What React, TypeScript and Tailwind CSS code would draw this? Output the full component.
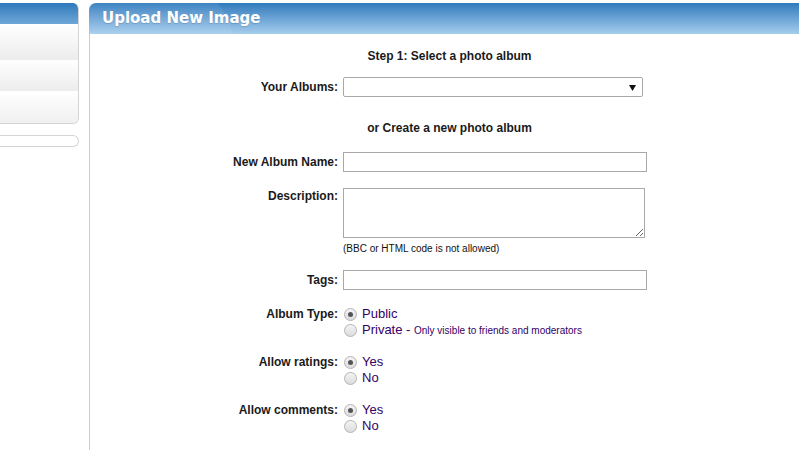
const font = "font-['Liberation_Sans',Arial,sans-serif]";

function Radio({ checked }: { checked?: boolean }) {
  return (
    <span className="flex h-[13px] w-[13px] shrink-0 items-center justify-center rounded-full border border-[#b3b3b3] bg-gradient-to-b from-[#f4f4f4] to-[#dcdcdc]">
      {checked && <span className="h-[5px] w-[5px] rounded-full bg-[#555]" />}
    </span>
  );
}

function Option({ label, checked, note }: { label: string; checked?: boolean; note?: string }) {
  return (
    <div className="flex h-4 items-center">
      <div className="ml-px w-[18px]">
        <Radio checked={checked} />
      </div>
      <span className="text-[13px] leading-4 text-[#330066]">
        {label}
        {note && (
          <>
            {" - "}
            <span className="text-[10px]">{note}</span>
          </>
        )}
      </span>
    </div>
  );
}

function Label({ children, className = "" }: { children: React.ReactNode; className?: string }) {
  return (
    <div className={`w-[252px] shrink-0 pr-[5px] text-right text-[12px] font-bold text-[#1a1a1a] ${className}`}>
      {children}
    </div>
  );
}

function SidePanel() {
  return (
    <div className="mt-[3px] w-[79px] shrink-0">
      <div className="overflow-hidden rounded-tr-[6px] rounded-br-[6px] border-r border-b border-[#d4d4d4]">
        <div className="h-[21px] bg-gradient-to-b from-[#2c79bb] to-[#6fa7d7]" />
        <div className="h-9 bg-gradient-to-b from-white to-[#ececec]" />
        <div className="h-[31px] bg-gradient-to-b from-white to-[#ececec]" />
        <div className="h-[32px] bg-gradient-to-b from-white to-[#f0f0f0]" />
      </div>
      <div className="mt-[11px] h-[12px] rounded-r-full border border-l-0 border-[#d4d4d4]" />
    </div>
  );
}

function UploadForm() {
  return (
    <div className="w-[718px] pl-px">
      <div className="mt-[14px] text-center text-[12px] font-bold leading-4 text-[#1a1a1a]">
        Step 1: Select a photo album
      </div>

      <div className="mt-[13px] flex items-center">
        <Label className="leading-[18px]">Your Albums:</Label>
        <div className="relative h-5 w-[300px] rounded-[2px] border border-[#a9a9a9] bg-white">
          <svg className="absolute top-[7px] right-[6px]" width="7" height="6" viewBox="0 0 7 6">
            <path d="M0 0h7L3.5 6z" fill="#111" />
          </svg>
        </div>
      </div>

      <div className="mt-[23px] text-center text-[12px] font-bold leading-4 text-[#1a1a1a]">
        or Create a new photo album
      </div>

      <div className="mt-4 flex items-center">
        <Label className="leading-5">New Album Name:</Label>
        <input className="h-5 w-[304px] border border-[#a9a9a9] bg-white outline-none" />
      </div>

      <div className="mt-4 flex items-start">
        <Label className="leading-4">Description:</Label>
        <div>
          <textarea className="block h-[50px] w-[302px] border border-[#a9a9a9] bg-white outline-none" />
          <div className="mt-[5px] text-[10px] leading-3 text-[#111]">(BBC or HTML code is not allowed)</div>
        </div>
      </div>

      <div className="mt-[15px] flex items-center">
        <Label className="leading-5">Tags:</Label>
        <input className="h-5 w-[304px] border border-[#a9a9a9] bg-white outline-none" />
      </div>

      <div className="mt-4 flex items-start">
        <Label className="leading-4">Album Type:</Label>
        <div>
          <Option label="Public" checked />
          <Option label="Private" note="Only visible to friends and moderators" />
        </div>
      </div>

      <div className="mt-4 flex items-start">
        <Label className="leading-4">Allow ratings:</Label>
        <div>
          <Option label="Yes" checked />
          <Option label="No" />
        </div>
      </div>

      <div className="mt-4 flex items-start">
        <Label className="leading-4">Allow comments:</Label>
        <div>
          <Option label="Yes" checked />
          <Option label="No" />
        </div>
      </div>
    </div>
  );
}

export default function App() {
  return (
    <div className={`flex h-[450px] w-[800px] gap-[10px] overflow-hidden bg-white ${font}`}>
      <SidePanel />
      <div className="mt-[3px] flex w-[710px] shrink-0 flex-col">
        <div className="relative flex h-[31px] items-center overflow-hidden rounded-tl-[7px] bg-gradient-to-b from-[#2e7bbd] to-[#a5cdec] pl-[13px]">
          <div className="absolute -top-[30px] -left-[202px] h-[160px] w-[348px] rounded-full bg-white/[0.07]" />
          <span className="relative font-['DejaVu_Sans',Verdana,sans-serif] text-[15px] font-bold text-white [text-shadow:0_1px_1px_rgba(0,0,0,0.15)]">
            Upload New Image
          </span>
        </div>
        <div className="flex-1 overflow-hidden border-l border-[#cccccc]">
          <UploadForm />
        </div>
      </div>
    </div>
  );
}
